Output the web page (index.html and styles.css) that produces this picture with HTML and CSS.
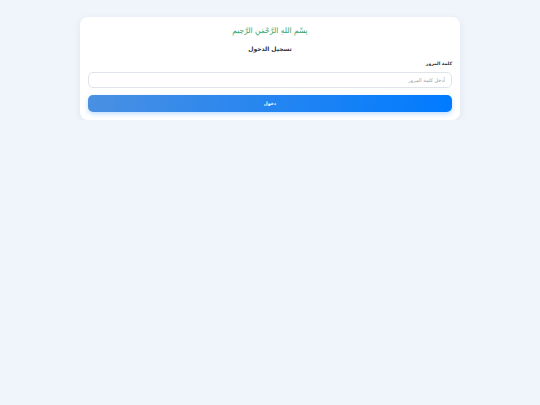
FILE: index.html
```html
<!DOCTYPE html>
<html lang="ar" dir="rtl">
<head>
<meta charset="utf-8">
<title>تسجيل الدخول</title>
<link rel="stylesheet" href="styles.css">
</head>
<body>
<div class="card">
  <div class="bismillah">بِسْمِ اللهِ الرَّحْمَنِ الرَّحِيمِ</div>
  <h1 class="title">تسجيل الدخول</h1>
  <form class="form">
    <label class="label" for="pw">كلمة المرور</label>
    <input class="input" id="pw" type="password" placeholder="أدخل كلمة المرور">
    <button class="btn" type="button">دخول</button>
  </form>
</div>
</body>
</html>
```
FILE: styles.css
```css
html, body {
  margin: 0;
  padding: 0;
}
body {
  background: #f0f4fb;
  font-family: "DejaVu Sans", "Liberation Sans", sans-serif;
  color: #333;
  padding-top: 17px;
}
.card {
  width: 364px;
  margin: 0 auto;
  background: #fff;
  border-radius: 8px;
  padding: 9px 8px 8px;
  box-shadow: 0 2px 8px rgba(30, 60, 120, 0.07);
}
.bismillah {
  text-align: center;
  color: #34a065;
  font-size: 7.5px;
  line-height: 10px;
}
.title {
  margin: 9px 0 0;
  text-align: center;
  font-size: 6px;
  line-height: 8px;
  font-weight: bold;
  color: #333;
}
.form {
  display: flex;
  flex-direction: column;
  margin-top: 8px;
}
.label {
  font-size: 4.5px;
  font-weight: bold;
  line-height: 6px;
  color: #333;
  margin-bottom: 5px;
}
.input {
  box-sizing: border-box;
  height: 16px;
  border: 1px solid #dfe3ea;
  border-radius: 5px;
  padding: 0 6px;
  font-family: inherit;
  font-size: 5px;
  color: #333;
  background: #fff;
  outline: none;
}
.input::placeholder {
  color: #9a9a9a;
}
.btn {
  margin-top: 7px;
  height: 17px;
  border: none;
  border-radius: 5px;
  background: linear-gradient(100deg, #4a90e2, #007bff);
  color: #fff;
  font-family: inherit;
  font-size: 4.5px;
  font-weight: bold;
  box-shadow: 0 2px 5px rgba(0, 123, 255, 0.25);
}
```
